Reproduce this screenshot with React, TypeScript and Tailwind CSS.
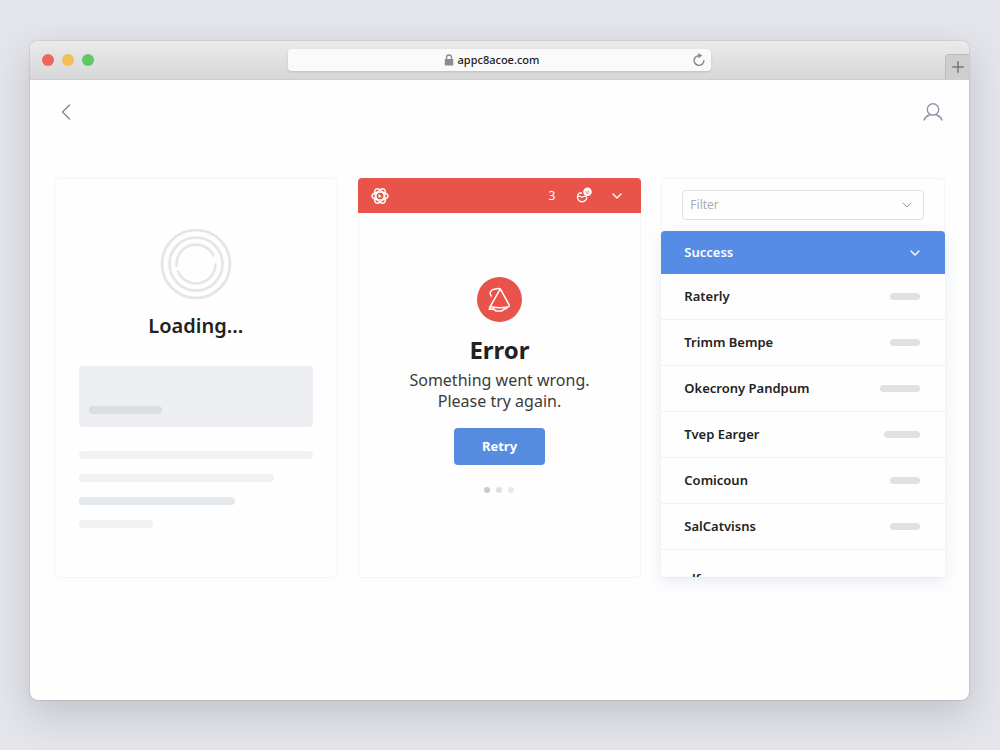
import { ChevronDown, ChevronLeft, Plus } from "lucide-react";

const rows = [
  { label: "Raterly", bar: "w-[30px]" },
  { label: "Trimm Bempe", bar: "w-[30px]" },
  { label: "Okecrony Pandpum", bar: "w-10" },
  { label: "Tvep Earger", bar: "w-9" },
  { label: "Comicoun", bar: "w-[30px]" },
  { label: "SalCatvisns", bar: "w-[30px]" },
];

const TitleBar = () => (
  <header className="flex h-[39px] items-center justify-between rounded-t-lg border-b border-[#cfcdcd] bg-linear-to-b from-[#ebebeb] to-[#d8d7d7]">
    <div className="flex flex-1 gap-2">
      <span className="ml-3 h-3 w-3 rounded-full bg-[#ee6560]" />
      <span className="h-3 w-3 rounded-full bg-[#f3bd58]" />
      <span className="h-3 w-3 rounded-full bg-[#5fc764]" />
    </div>

    <div className="flex h-[22px] w-[45%] items-center rounded bg-[#fafafa] px-1 shadow-sm">
      <div className="flex flex-1 items-center justify-center gap-1">
        <svg viewBox="0 0 10 12" className="h-3 w-[10px]" fill="none">
          <path d="M2.5 6V3.5a2.5 2.5 0 0 1 5 0V6" stroke="#8b8b8b" strokeWidth="1.3" />
          <rect x="0.8" y="5" width="8.4" height="6.6" rx="0.6" fill="#8b8b8b" />
        </svg>
        <span className="text-[11px] font-medium text-[#222]">appc8acoe.com</span>
      </div>
      <button aria-label="Reload" className="text-[#858585]">
        <svg viewBox="0 0 16 16" className="h-4 w-4" fill="none">
          <path d="M7.8 3.6A4.9 4.9 0 1 0 12.9 8.2" stroke="currentColor" strokeWidth="1.4" />
          <path d="M7.3 0.9v5.400l4-2.700z" fill="currentColor" />
        </svg>
      </button>
    </div>

    <div className="flex flex-1 justify-end self-end">
      <button
        aria-label="New tab"
        className="flex h-[25px] w-6 items-center justify-center rounded-tl-sm border-t border-l border-[#bdbcbc] bg-[#cfcece] text-[#777]"
      >
        <Plus size={18} strokeWidth={2} />
      </button>
    </div>
  </header>
);

const LoadingCard = () => (
  <section className="flex h-[400px] flex-col items-center rounded border border-[#f4f5f6] px-6 pt-[49px]">
    <svg viewBox="0 0 72 72" className="h-[72px] w-[72px]" fill="none" stroke="#e3e5e9" strokeWidth="2.6">
      <circle cx="36" cy="36" r="34" />
      <circle cx="36" cy="36" r="26.5" />
      <path d="M16.6 38A19.5 19.5 0 0 1 53.5 27.5" strokeLinecap="round" />
      <path d="M55.5 36.5A19.5 19.5 0 0 1 18 43.5" strokeLinecap="round" />
    </svg>
    <h2 className="mt-3 text-xl leading-7 font-semibold text-[#222]">Loading...</h2>

    <div className="mt-[26px] flex h-[61px] w-full items-end rounded bg-[#edeef1] px-[10px] pb-[13px]">
      <div className="h-2 w-[73px] rounded-full bg-[#dcdde1]" />
    </div>
    <div className="mt-6 flex w-full flex-col gap-[15px]">
      <div className="h-2 w-full rounded-full bg-[#f1f2f4]" />
      <div className="h-2 w-5/6 rounded-full bg-[#f0f1f2]" />
      <div className="h-2 w-2/3 rounded-full bg-[#e5e8eb]" />
      <div className="h-2 w-[74px] rounded-full bg-[#f0f1f2]" />
    </div>
  </section>
);

const ErrorCard = () => (
  <section className="flex h-[400px] flex-col items-center rounded border border-t-0 border-[#f4f5f6]">
    <div className="-mx-px flex h-[35px] items-center self-stretch rounded-t bg-[#e8534a] pr-4 pl-[13px] text-white">
      <svg viewBox="0 0 18 18" className="h-[18px] w-[18px]" fill="none" stroke="currentColor" strokeWidth="1.5">
        <ellipse cx="9" cy="9" rx="8" ry="4.1" />
        <ellipse cx="9" cy="9" rx="8" ry="4.1" transform="rotate(60 9 9)" />
        <ellipse cx="9" cy="9" rx="8" ry="4.1" transform="rotate(120 9 9)" />
        <path d="M8.2 7.6v2h2" />
      </svg>
      <span className="ml-auto text-xs">3</span>
      <button aria-label="Notifications" className="ml-5">
        <svg viewBox="0 0 18 18" className="h-[18px] w-[18px]" fill="none">
          <path d="M7 6H4.500A4.400 4.400 0 0 0 2.500 9.800a4.700 4.700 0 0 0 9.400.5" stroke="currentColor" strokeWidth="1.3" />
          <path d="M3 9.400h2.400l1.200 1 3-1.200 2.200.4" stroke="currentColor" strokeWidth="1.2" />
          <circle cx="12.5" cy="4.800" r="4.300" fill="currentColor" />
          <path d="M10.800 4.400a1.800 1.800 0 0 0 3.400 1M12.300 4.800l1.800-1" stroke="#e8534a" strokeWidth="0.8" />
        </svg>
      </button>
      <button aria-label="Expand" className="ml-4">
        <ChevronDown size={16} strokeWidth={2} />
      </button>
    </div>

    <div className="mt-16 flex h-[45px] w-[45px] items-center justify-center rounded-full bg-[#e8534a]">
      <svg
        viewBox="0 0 24 26"
        className="h-[26px] w-6 text-white"
        fill="none"
        stroke="currentColor"
        strokeWidth="1.5"
        strokeLinecap="round"
        strokeLinejoin="round"
      >
        <path d="M4.2 9C2.200 6 3.400 2.800 7 2.300l4.600-.7q1.400-.2 2.100 1L22 17.600q.8 2-1.200 2.400c-5.500 1.200-11.500 1-17.600-.4L13 2.300" />
        <path d="M3.200 19.600l-1 2.600 4.400-.1M6.600 22.100l2.300 1.800h6l2.300-1.800q2.400 0 2.700-1.800" />
      </svg>
    </div>
    <h2 className="mt-3 text-2xl leading-8 font-bold text-[#222]">Error</h2>
    <p className="mt-1 text-center text-base leading-[21px] text-[#3b3b3b]">
      Something went wrong.
      <br />
      Please try again.
    </p>
    <button className="mt-4 h-[37px] w-[91px] rounded bg-[#568ce0] text-[13px] font-bold text-white">Retry</button>
    <div className="mt-[22px] flex gap-[6px]">
      <span className="h-[6px] w-[6px] rounded-full bg-[#c3cad2]" />
      <span className="h-[6px] w-[6px] rounded-full bg-[#dcdfe4]" />
      <span className="h-[6px] w-[6px] rounded-full bg-[#e6e8eb]" />
    </div>
  </section>
);

const ListCard = () => (
  <section className="flex h-[400px] flex-col rounded border border-[#f4f5f6]">
    <label className="mx-5 mt-[11px] flex h-[30px] items-center rounded border border-[#dfe2e4] pr-2 pl-[7px]">
      <input
        aria-label="Filter"
        placeholder="Filter"
        className="min-w-0 flex-1 text-xs outline-none placeholder:text-[#a9adb3]"
      />
      <ChevronDown size={16} strokeWidth={1.5} className="text-[#92979e]" />
    </label>

    <div className="-mx-px mt-[11px] flex min-h-0 flex-1 flex-col overflow-hidden rounded shadow-[0_5px_16px_rgba(80,110,170,0.13)]">
      <button className="flex h-[43px] shrink-0 items-center justify-between bg-[#568ce5] pr-[22px] pl-[23px] text-[13px] font-semibold text-white">
        Success
        <ChevronDown size={16} strokeWidth={2} />
      </button>
      <ul className="bg-[#fefefe] text-[13px] font-semibold text-[#222]">
        {rows.map((row) => (
          <li
            key={row.label}
            className="flex h-[46px] items-center justify-between border-b border-[#f0f1f3] pr-[25px] pl-[23px]"
          >
            {row.label}
            <span className={`h-[7px] rounded-full bg-[#dfe2e5] ${row.bar}`} />
          </li>
        ))}
        <li className="flex h-[60px] items-center px-[23px]">alf</li>
      </ul>
    </div>
  </section>
);

const App = () => {
  return (
    <div className="flex min-h-screen flex-col bg-[#e4e5ea] pt-[41px] pr-[31px] pb-[50px] pl-[30px] font-['Noto_Sans',sans-serif]">
      <div className="flex flex-1 flex-col rounded-lg bg-[#fefefe] shadow-[0_14px_36px_rgba(40,40,55,0.18),0_0_2px_rgba(0,0,0,0.25)]">
        <TitleBar />
        <nav className="flex items-center justify-between px-6 pt-5">
          <button aria-label="Back" className="text-[#87909a]">
            <ChevronLeft size={28} strokeWidth={1.3} className="-m-[2px]" />
          </button>
          <button aria-label="Account" className="text-[#8c96a5]">
            <svg viewBox="0 0 24 24" className="h-6 w-6" fill="none" stroke="currentColor" strokeWidth="1.4">
              <circle cx="12" cy="9.5" r="5.7" />
              <path d="M3 20c1-2.700 3-4.300 5.500-5M21 20c-1-2.700-3-4.300-5.500-5" strokeLinecap="round" />
            </svg>
          </button>
        </nav>
        <main className="grid grid-cols-3 gap-5 px-6 pt-[54px] pb-8">
          <LoadingCard />
          <ErrorCard />
          <ListCard />
        </main>
      </div>
    </div>
  );
};

export default App;
